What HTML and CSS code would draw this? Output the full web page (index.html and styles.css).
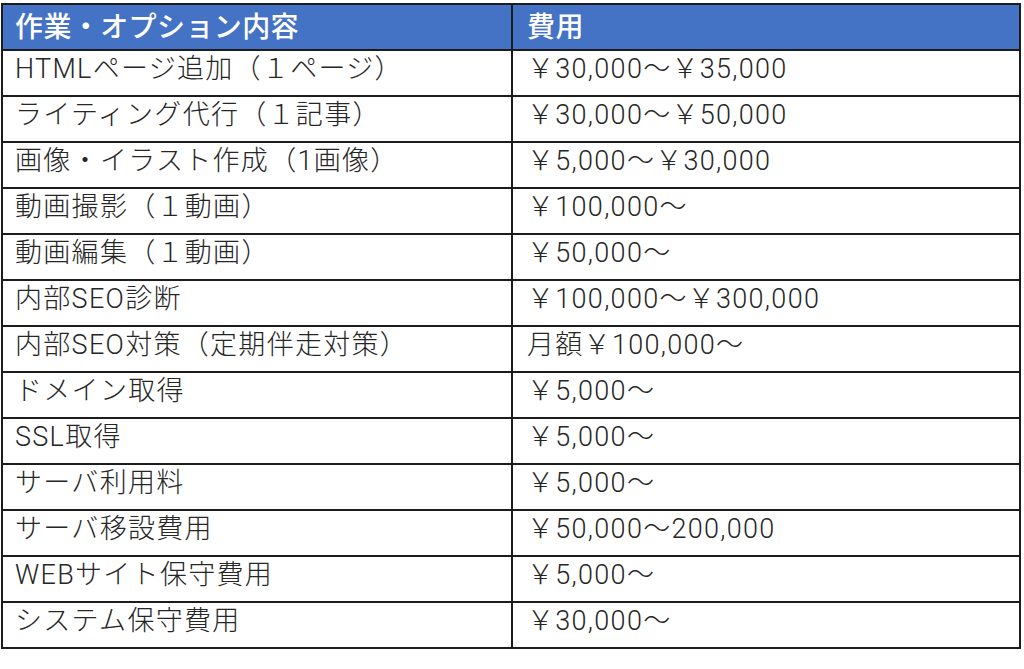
FILE: index.html
```html
<!DOCTYPE html>
<html lang="ja">
<head>
<meta charset="utf-8">
<link rel="stylesheet" href="styles.css">
</head>
<body>
<table class="price">
<thead>
<tr><th class="c1">作業・オプション内容</th><th class="c2">費用</th></tr>
</thead>
<tbody>
<tr><td>HTMLページ追加（１ページ）</td><td>￥30,000～￥35,000</td></tr>
<tr><td>ライティング代行（１記事）</td><td>￥30,000～￥50,000</td></tr>
<tr><td>画像・イラスト作成（1画像）</td><td>￥5,000～￥30,000</td></tr>
<tr><td>動画撮影（１動画）</td><td>￥100,000～</td></tr>
<tr><td>動画編集（１動画）</td><td>￥50,000～</td></tr>
<tr><td>内部SEO診断</td><td>￥100,000～￥300,000</td></tr>
<tr><td>内部SEO対策（定期伴走対策）</td><td>月額￥100,000～</td></tr>
<tr><td>ドメイン取得</td><td>￥5,000～</td></tr>
<tr><td>SSL取得</td><td>￥5,000～</td></tr>
<tr><td>サーバ利用料</td><td>￥5,000～</td></tr>
<tr><td>サーバ移設費用</td><td>￥50,000～200,000</td></tr>
<tr><td>WEBサイト保守費用</td><td>￥5,000～</td></tr>
<tr><td>システム保守費用</td><td>￥30,000～</td></tr>
</tbody>
</table>
</body>
</html>
```
FILE: styles.css
```css
html, body {
  margin: 0;
  padding: 0;
  background: #ffffff;
}
body {
  padding: 3px 0 0 1px;
  font-family: Roboto, "Noto Sans CJK JP", "Noto Sans", sans-serif;
}
.price {
  border-collapse: collapse;
  width: 1020px;
  table-layout: fixed;
  color: #262626;
}
.price th,
.price td {
  border: 2px solid #1c1c1c;
  height: 37px;
  padding: 0 0 7px 12px;
  text-align: left;
  font-size: 27px;
  font-weight: 300;
  line-height: 1;
  letter-spacing: 1.3px;
  white-space: nowrap;
}
.price td + td,
.price th + th {
  padding-left: 14px;
}
.price th {
  padding-bottom: 4px;
  height: 40px;
}
.price .c1 { width: 496px; }
.price th {
  background: #4472c4;
  color: #ffffff;
  font-family: "Noto Sans CJK JP", sans-serif;
  font-size: 28px;
  font-weight: 500;
  letter-spacing: 0.4px;
}
```
